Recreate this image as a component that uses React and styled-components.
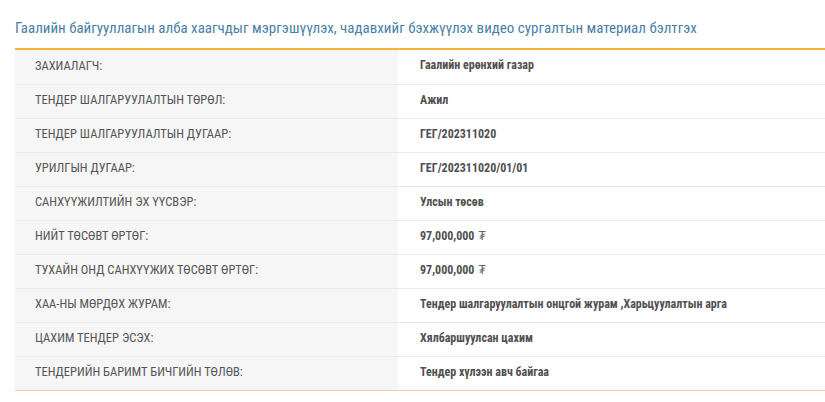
import React from "react";
import styled, { createGlobalStyle } from "styled-components";

const GlobalStyle = createGlobalStyle`
  body {
    margin: 0;
    background: #fff;
    font-family: "Roboto Condensed", "Liberation Sans Narrow", sans-serif;
  }
`;

const Page = styled.div`
  padding: 17px 0 0 15px;
`;

const Title = styled.h2`
  margin: 0 0 9px;
  font-size: 15px;
  font-weight: 400;
  line-height: 22px;
  color: #4a7fa8;
  white-space: nowrap;
`;

const Table = styled.div`
  border-top: 2px solid #f0b63c;
  border-bottom: 1px solid #ecd38e;
`;

const Row = styled.div`
  display: grid;
  grid-template-columns: 383px 1fr;
  height: 34px;
  & + & > * {
    border-top: 1px solid #ebebeb;
  }
`;

const Cell = styled.div`
  display: flex;
  align-items: center;
  padding-bottom: 4px;
`;

const Label = styled(Cell)`
  padding-left: 20px;
  background: #f6f6f6;
  color: #555;
  font-size: 12.5px;
  text-transform: uppercase;
`;

const Value = styled(Cell)`
  padding-left: 22px;
  color: #505050;
  font-size: 12px;
  font-weight: 700;
`;

const Tugrik = styled.span`
  margin-left: 4px;
  font-weight: 400;
  color: #666;
`;

const rows = [
  ["Захиалагч:", "Гаалийн ерөнхий газар"],
  ["Тендер шалгаруулалтын төрөл:", "Ажил"],
  ["Тендер шалгаруулалтын дугаар:", "ГЕГ/202311020"],
  ["Урилгын дугаар:", "ГЕГ/202311020/01/01"],
  ["Санхүүжилтийн эх үүсвэр:", "Улсын төсөв"],
  ["Нийт төсөвт өртөг:", "97,000,000", true],
  ["Тухайн онд санхүүжих төсөвт өртөг:", "97,000,000", true],
  ["ХАА-ны мөрдөх журам:", "Тендер шалгаруулалтын онцгой журам ,Харьцуулалтын арга"],
  ["Цахим тендер эсэх:", "Хялбаршуулсан цахим"],
  ["Тендерийн баримт бичгийн төлөв:", "Тендер хүлээн авч байгаа"],
];

export default function App() {
  return (
    <Page>
      <GlobalStyle />
      <Title>Гаалийн байгууллагын алба хаагчдыг мэргэшүүлэх, чадавхийг бэхжүүлэх видео сургалтын материал бэлтгэх</Title>
      <Table>
        {rows.map(([label, value, money]) => (
          <Row key={label}>
            <Label>{label}</Label>
            <Value>
              {value}
              {money && <Tugrik>₮</Tugrik>}
            </Value>
          </Row>
        ))}
      </Table>
    </Page>
  );
}
